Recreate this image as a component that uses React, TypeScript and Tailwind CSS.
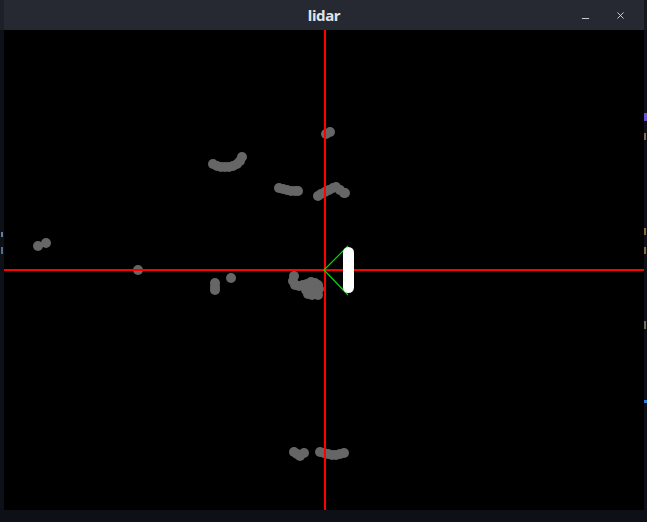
import { Minus, X } from "lucide-react";

// points in page coords, shifted into canvas space below
const POINTS: [number, number][] = [
  [326, 134], [330, 132],
  [213, 164], [217, 166], [221, 167], [225, 167], [229, 167], [233, 166], [237, 164], [240, 161], [242, 157],
  [279, 188], [283, 189], [287, 190], [291, 191], [295, 191], [298, 191],
  [318, 196], [321, 194], [325, 192], [329, 190], [333, 188], [336, 187], [340, 190], [344, 193], [345, 193],
  [38, 246], [46, 243],
  [138, 270],
  [215, 283], [215, 287], [215, 290], [231, 278],
  [294, 276], [293, 281], [295, 285], [299, 286], [303, 285], [307, 284], [311, 282], [315, 283], [318, 285],
  [319, 289], [315, 291], [311, 291], [308, 294], [312, 295], [318, 295], [306, 290],
  [294, 452], [297, 454], [300, 456], [304, 453], [320, 452], [324, 453], [328, 454], [332, 455], [336, 455], [340, 454], [344, 453],
];

function LidarCanvas() {
  return (
    <svg width={640} height={480} viewBox="0 0 640 480" className="block">
      <rect x={0} y={0} width={640} height={480} fill="#000" />
      {POINTS.map(([x, y], i) => (
        <circle key={i} cx={x - 4} cy={y - 30} r={5} fill="#666666" />
      ))}
      <rect x={320} y={0} width={2} height={480} fill="#ff0000" />
      <rect x={0} y={239} width={640} height={2} fill="#ff0000" />
      <polyline points="344,216 320,240 344,265" fill="none" stroke="#00dd00" strokeWidth={1.2} />
      <rect x={339} y={217} width={11} height={46} rx={5.5} fill="#ffffff" />
    </svg>
  );
}

export default function App() {
  return (
    <div className="w-[647px] h-[522px] bg-[#0e1017] flex overflow-hidden font-['Noto_Sans',sans-serif]">
      {/* sliver of whatever window sits behind, left side */}
      <div className="w-[4px] h-full flex flex-col">
        <div className="h-[30px] bg-[#1d2027]" />
        <span className="ml-[1px] mt-[202px] w-[2px] h-[5px] bg-[#5b7fa6]" />
        <span className="ml-[1px] mt-[10px] w-[2px] h-[7px] bg-[#4b6f96]" />
      </div>
      <div className="w-[640px] flex flex-col">
        <div className="h-[30px] bg-[#262932] flex items-center">
          <div className="w-[64px]" />
          <div className="flex-1 text-center text-[15px] font-bold text-[#dfe3ea] tracking-tight">lidar</div>
          <div className="w-[64px] flex items-center justify-end gap-[24px] pr-[18px]">
            <Minus size={11} strokeWidth={2} className="text-[#d6dae2] mt-[7px]" />
            <X size={11} strokeWidth={2} className="text-[#d6dae2]" />
          </div>
        </div>
        <LidarCanvas />
      </div>
      {/* right side sliver */}
      <div className="w-[3px] h-full flex flex-col">
        <div className="h-[30px] bg-[#16181f]" />
        <span className="mt-[83px] w-[3px] h-[8px] bg-[#6a4fd0]" />
        <span className="mt-[12px] w-[2px] h-[7px] bg-[#8a6a45]" />
        <span className="mt-[88px] w-[2px] h-[7px] bg-[#8a6a45]" />
        <span className="mt-[12px] w-[2px] h-[7px] bg-[#8a6a45]" />
        <span className="mt-[67px] w-[2px] h-[8px] bg-[#7a6a55]" />
        <span className="mt-[71px] w-[3px] h-[3px] bg-[#2f7fd6]" />
      </div>
    </div>
  );
}
